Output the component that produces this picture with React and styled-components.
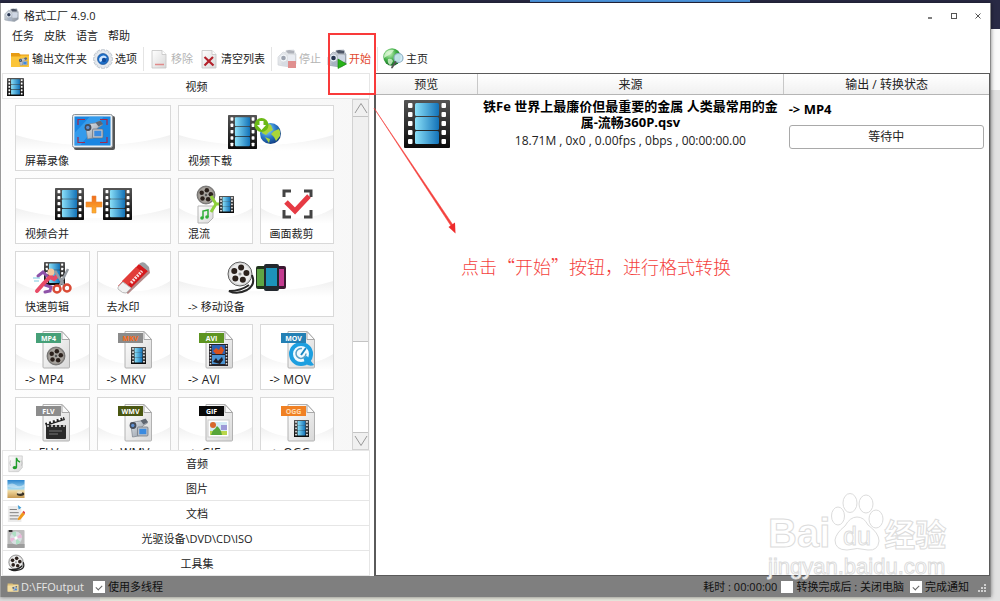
import React from "react";
import styled, { createGlobalStyle } from "styled-components";

const GlobalStyle = createGlobalStyle`
  * {
    box-sizing: border-box;
  }
  body {
    margin: 0;
    font-family: "Open Sans", "Noto Sans CJK SC", sans-serif;
    font-size: 11px;
    line-height: 16px;
    color: #222;
  }
  button {
    font: inherit;
    color: inherit;
    background: none;
    border: 0;
    padding: 0;
  }
  svg {
    display: block;
    flex: none;
  }
`;

/* ---------- drawings ---------- */

const Defs = () => (
  <svg width="0" height="0" style={{ position: "absolute" }} aria-hidden="true">
    <defs>
      <linearGradient id="frame" x1="0" x2="1" y1="0" y2="0">
        <stop offset="0" stopColor="#8be0f8" />
        <stop offset="1" stopColor="#1272b8" />
      </linearGradient>
      <linearGradient id="strip" x1="0" x2="0" y1="0" y2="1">
        <stop offset="0" stopColor="#555" />
        <stop offset="1" stopColor="#0a0a0a" />
      </linearGradient>
      <linearGradient id="paper" x1="0" x2="1" y1="0" y2="1">
        <stop offset="0" stopColor="#fff" />
        <stop offset="1" stopColor="#d8d8d8" />
      </linearGradient>
      <linearGradient id="metal" x1="0" x2="1" y1="0" y2="1">
        <stop offset="0" stopColor="#e8ecf0" />
        <stop offset="1" stopColor="#87909c" />
      </linearGradient>
      <radialGradient id="globe" cx="0.35" cy="0.3" r="0.8">
        <stop offset="0" stopColor="#9fe0ff" />
        <stop offset="0.5" stopColor="#2b7cc9" />
        <stop offset="1" stopColor="#0b2f73" />
      </radialGradient>
      <radialGradient id="greenGlobe" cx="0.35" cy="0.3" r="0.8">
        <stop offset="0" stopColor="#c9f5c0" />
        <stop offset="0.5" stopColor="#3fae45" />
        <stop offset="1" stopColor="#0c5a1c" />
      </radialGradient>
      <linearGradient id="sky" x1="0" x2="0" y1="0" y2="1">
        <stop offset="0" stopColor="#2b86cf" />
        <stop offset="0.5" stopColor="#a9dcf2" />
        <stop offset="0.6" stopColor="#f1d9a0" />
        <stop offset="1" stopColor="#c79a52" />
      </linearGradient>
      <linearGradient id="orange" x1="0" x2="0" y1="0" y2="1">
        <stop offset="0" stopColor="#f06a1c" />
        <stop offset="1" stopColor="#ffb52e" />
      </linearGradient>
    </defs>
  </svg>
);

const Film = ({ x = 0, y = 0, w = 30, h = 34 }) => (
  <svg x={x} y={y} width={w} height={h} viewBox="0 0 46 48" preserveAspectRatio="none">
    <rect width="46" height="48" rx="1" fill="url(#strip)" />
    {[3, 12, 21, 30, 39].map((top) => (
      <g key={top} fill="#fff">
        <rect x="4" y={top} width="4.500" height="5" rx="1" />
        <rect x="37.500" y={top} width="4.500" height="5" rx="1" />
      </g>
    ))}
    {[3, 17, 31].map((top) => (
      <rect key={top} x="11" y={top} width="24" height="13" rx="1.500" fill="url(#frame)" />
    ))}
  </svg>
);

const Reel = ({ cx, cy, r, light }) => (
  <g transform={`translate(${cx} ${cy}) scale(${r / 10})`}>
    <circle r="10" fill={light ? "#d9d9d9" : "#8b8783"} stroke="#5a5a5a" strokeWidth="0.800" />
    <circle r="8.500" fill={light ? "#ececec" : "#a8a49f"} />
    {[-80, -8, 64, 136, 208].map((a) => (
      <circle
        key={a}
        cx={5.4 * Math.cos((a * Math.PI) / 180)}
        cy={5.4 * Math.sin((a * Math.PI) / 180)}
        r="2.500"
        fill="#2b211c"
      />
    ))}
    <circle r="1.300" fill={light ? "#999" : "#555"} />
  </g>
);

const Camcorder = ({ x = 0, y = 0, w = 20, h = 20 }) => (
  <svg x={x} y={y} width={w} height={h} viewBox="0 0 20 20">
    <path d="M2 5 L8 3.500 L12 3 L17 1 L19 5 L14 8 L10 18 L4 19 L3 11 Z" fill="url(#metal)" stroke="#7b828c" strokeWidth="0.700" />
    <path d="M12 2.500 L17 0.800 L19.500 4 L15 6.500 Z" fill="#5f6671" />
    <circle cx="4.500" cy="7.500" r="3.400" fill="#454b57" />
    <circle cx="4.300" cy="7.500" r="1.700" fill="#5f8fd0" />
    <rect x="9" y="9" width="10.500" height="9" rx="1" fill="#b9bec6" stroke="#69707a" strokeWidth="0.700" />
    <rect x="10.800" y="10.800" width="7" height="5.400" fill="#3b8be0" />
  </svg>
);

/* the two-camera mark shared by the title bar, stop and start */
const AppMark = ({ w = 20, faded, children }) => (
  <svg width={w} height={w} viewBox="0 0 20 20">
    <g opacity={faded ? 0.45 : 1}>
      <path d="M1 8 L6 3 L9 4 L9 1.500 L17 1 L18 4 L19 5 L19 15 L14 18 L6 17 L1 16 Z" fill="url(#metal)" stroke="#8d97a6" strokeWidth="0.600" />
      <path d="M9 2 L12 1 L17 2 L17 4.500 L11 4.500 Z" fill="#4d5566" />
      <rect x="11" y="6" width="7" height="7" rx="1" fill="#cfd7e4" />
      <circle cx="6.500" cy="9" r="4" fill="#e8eef6" stroke="#8c96a5" strokeWidth="0.500" />
      <circle cx="6.500" cy="9" r="2.300" fill="#26344f" />
      <path d="M4 14 L10 12 L11 17 L6 17 Z" fill="#a7b2c2" />
    </g>
    {children}
  </svg>
);

const Page = ({ x = 3, children }) => (
  <svg width="20" height="20" viewBox="0 0 20 20">
    <path d={`M${x} 1.500 h10 l4 4 v13.500 h-14 z`} fill="url(#paper)" stroke="#c4c4c4" strokeWidth="0.800" />
    <path d={`M${x + 10} 1.500 v4 h4`} fill="#fff" stroke="#c4c4c4" strokeWidth="0.800" />
    {children}
  </svg>
);

const FolderIcon = ({ size = 20, pale }) => (
  <svg width={size} height={size} viewBox="0 0 20 20">
    <path d="M1 4 h8 l1.500 1.500 H19 V17 H1 z" fill={pale ? "#d9bd78" : "#e79b12"} />
    <path d="M1 7.500 h9 l1-1 h8 V18 H1 z" fill={pale ? "#f3dda0" : "#fbc53a"} />
    <Camcorder x={8} y={8} w={10} h={9} />
  </svg>
);

const GearIcon = () => (
  <svg width="20" height="20" viewBox="0 0 20 20">
    <g fill="#dfe4ea" stroke="#a3adb8" strokeWidth="0.500">
      {[0, 30, 60, 90, 120, 150].map((a) => (
        <rect key={a} x="8.300" y="0.400" width="3.400" height="19.200" rx="0.800" transform={`rotate(${a} 10 10)`} />
      ))}
    </g>
    <circle cx="10" cy="10" r="8" fill="#e6eaef" />
    <circle cx="10" cy="10" r="5.500" fill="#1d6fc8" stroke="#12468a" strokeWidth="0.600" />
    <path d="M7 13 A4 4 0 0 1 13.800 8.500 L12 10 A2.200 2.200 0 0 0 9 12 Z" fill="#cfe6ff" />
    <circle cx="11" cy="11" r="2.200" fill="#114b9c" />
  </svg>
);

const HomeIcon = () => (
  <svg width="21" height="21" viewBox="0 0 21 21">
    <circle cx="9" cy="9" r="8.700" fill="url(#greenGlobe)" />
    <path d="M3 4 Q7 1 11 2 Q9 6 6 7 Q4 8 1 10 Q1 6 3 4 Z M5 11 q4-1 5 2 q-1 3-3 4 q-3-2-2-6z" fill="#e0f8da" opacity="0.750" />
    <circle cx="15.500" cy="10" r="4.500" fill="#cdeaf6" fillOpacity="0.900" stroke="#8fb0c4" strokeWidth="1.200" />
    <path d="M12.500 14 L9 19.500" stroke="#555" strokeWidth="1.800" strokeLinecap="round" />
  </svg>
);

const FileArt = ({ tag, fill, ink = "#fff", children }) => (
  <svg width="40" height="42" viewBox="0 0 40 42">
    <path d="M11 1.500 h19 l7.500 8 v27.500 a1 1 0 0 1 -1 1 h-24.500 a1 1 0 0 1 -1 -1 z" fill="url(#paper)" stroke="#b2b2b2" />
    <path d="M30 1.500 v8 h7.500 z" fill="#fafafa" stroke="#a8a8a8" />
    {children}
    <rect x="4" y="3" width="25" height="10" fill={fill} />
    <text x="16.500" y="11" textAnchor="middle" fontSize="7" fontWeight="700" fontFamily="Open Sans, sans-serif" fill={ink}>
      {tag}
    </text>
  </svg>
);

const art = {
  record: (
    <svg width="46" height="42" viewBox="0 0 46 42">
      <rect x="4" y="5" width="41" height="34" rx="2" fill="#555" />
      <rect x="2.500" y="3.500" width="40" height="33" rx="2" fill="#e9edf0" stroke="#8d9499" />
      <rect x="4.500" y="5.500" width="36" height="29" fill="#1a86e2" />
      <path d="M4.500 22 L20 5.500 H34 L10 34.500 H4.500Z" fill="#4eb0f5" opacity="0.500" />
      <path d="M8 14 V8.500 h7 M30 8.500 h7 V14 M8 26 v5.500 h7 M30 31.500 h7 V26" stroke="#a02a50" strokeWidth="1.200" fill="none" />
      <Camcorder x={13} y={9} w={21} h={20} />
    </svg>
  ),
  download: (
    <svg width="58" height="42" viewBox="0 0 58 42">
      <Film x={1} y={4} w={29} h={34} />
      <circle cx="43.500" cy="22.500" r="10.500" fill="url(#globe)" />
      <path d="M37 15 q5-3 7-1 l2 5 -4 2 -3 3 -4-2 z M47 20 l5-2 q2 3 1 7 l-4 5 -2-4 -3-3z M38 26 l5 2 -1 4z" fill="#a8d53a" />
      <circle cx="34.500" cy="14" r="7" fill="#6cb916" />
      <path d="M32.500 10 h4 v4 h2.500 l-4.500 5 -4.500-5 h2.500z" fill="#fff" />
    </svg>
  ),
  merge: (
    <svg width="78" height="42" viewBox="0 0 78 42">
      <Film x={1} y={4} w={29} h={32} />
      <path d="M38 12 h4 v6 h6 v5 h-6 v6 h-4 v-6 h-6 v-5 h6z" fill="url(#orange)" stroke="#e88a3a" strokeWidth="0.600" />
      <Film x={49} y={4} w={29} h={32} />
    </svg>
  ),
  mux: (
    <svg width="40" height="42" viewBox="0 0 40 42">
      <Reel cx={11} cy={11} r={9} />
      <path d="M3 22 h15 v12 l-5 5 h-10z" fill="url(#paper)" stroke="#b5b5b5" />
      <path d="M8 34 v-7 l5-1 v7" stroke="#2fae38" strokeWidth="1.500" fill="none" />
      <circle cx="7" cy="34" r="1.800" fill="#2fae38" />
      <circle cx="12" cy="33" r="1.800" fill="#2fae38" />
      <path d="M16 12 L21 20 M16 28 L21 20 H27" stroke="#8fd03c" strokeWidth="3" fill="none" />
      <Film x={24} y={12} w={15} h={17} />
    </svg>
  ),
  crop: (
    <svg width="40" height="42" viewBox="0 0 40 42">
      <path d="M7 13 V7 h7 M27 7 h7 v6 M7 26 v7 h7 M27 33 h7 v-7" stroke="#444" strokeWidth="3" fill="none" />
      <path d="M9 18 L18 27 L32 12" stroke="#e63a44" strokeWidth="5" fill="none" />
    </svg>
  ),
  cut: (
    <svg width="42" height="42" viewBox="0 0 42 42">
      <Film x={13} y={5} w={21} h={23} />
      <path d="M17 20 L12 15 L7 19 M14 28 L20 30 L19 34 L14 35" stroke="#8e52a8" strokeWidth="3" fill="none" strokeLinecap="round" />
      <path d="M20 19 L13 26 L6 34 M19 20 L23 22 L26 19" stroke="#e84a66" strokeWidth="4" fill="none" strokeLinecap="round" />
      <circle cx="20" cy="15" r="3.500" fill="#f4c69c" />
      <path d="M2 21 h7 M3 24 h5" stroke="#78c9e0" strokeWidth="1" />
      <path d="M24 14 L34 30 M37 12 L28 30" stroke="#969ca3" strokeWidth="2.500" />
      <circle cx="26" cy="32" r="3.500" fill="none" stroke="#d94a35" strokeWidth="2.500" />
      <circle cx="36" cy="31" r="3.500" fill="none" stroke="#d94a35" strokeWidth="2.500" />
    </svg>
  ),
  eraser: (
    <svg width="40" height="42" viewBox="0 0 40 42">
      <path d="M27 6 L35 11 L36 16 L14 37 L11 35z" fill="#6d1010" opacity="0.500" />
      <path d="M25 7 L34 14 L12 36 L4 29z" fill="#d5191c" />
      <path d="M22 10 L27 14 L13 29 L8 24z" fill="#e23c38" />
      <path d="M25 7 q3-3 6 -1 l4 4 q1 2 -1 4z" fill="#9b9ea2" />
      <path d="M9 25 L17 31 L12 36 Q9 37 4 32 Q3 30 9 25z" fill="#f1f1f1" stroke="#bbb" />
      <path d="M17 26 L28 14" stroke="#fff" strokeWidth="3" strokeDasharray="2 1" opacity="0.850" />
    </svg>
  ),
  mobile: (
    <svg width="62" height="42" viewBox="0 0 62 42">
      <Reel cx={15} cy={17} r={12} light />
      <path d="M27 18 Q31 28 22 33 Q12 38 4 34 Q16 34 24 28" stroke="#272727" strokeWidth="2" fill="none" />
      <rect x="31" y="9" width="13" height="23" rx="2" fill="#20331c" />
      <rect x="32" y="12" width="9" height="17" fill="#5ea544" />
      <rect x="48" y="9" width="13" height="23" rx="2" fill="#3b1831" />
      <rect x="50" y="12" width="9" height="17" fill="#c43a90" />
      <rect x="39" y="7" width="15" height="27" rx="2" fill="#22282e" />
      <rect x="41" y="11" width="11" height="18" fill="#1c93ba" />
    </svg>
  ),
  mp4: (
    <FileArt tag="MP4" fill="#46a078">
      <Reel cx={24} cy={26} r={9} />
    </FileArt>
  ),
  mkv: (
    <FileArt tag="MKV" fill="#8b8b8b" ink="#ff6a14">
      <Film x={17} y={17} w={15} h={17} />
    </FileArt>
  ),
  avi: (
    <FileArt tag="AVI" fill="#5d9420">
      <rect x="14" y="14" width="19" height="22" fill="#27242a" />
      <rect x="17" y="15" width="13" height="9" fill="#2d62b4" />
      <rect x="17" y="25" width="13" height="9" fill="#4b93d2" />
      <path d="M18 21 l3-3 3 2 2-4 3 4 -2 4 h-6z" fill="#d9521c" />
      <path d="M18 32 l3-4 2 3 4-4 1 3 -3 4z" fill="#1d1a22" />
      <path d="M15.500 15 v21 M31.500 15 v21" stroke="#d8d8d8" strokeWidth="1.500" strokeDasharray="1.500 1.500" />
    </FileArt>
  ),
  mov: (
    <FileArt tag="MOV" fill="#2480b4">
      <circle cx="24" cy="24" r="10" fill="#f3fbff" stroke="#1d9fe0" strokeWidth="4" />
      <path d="M26 27 L30 26 L37 35 Q32 37 28 33z" fill="#1d9fe0" />
      <path d="M25 18.500 a5 5 0 1 0 4 5" stroke="#5ba0c6" strokeWidth="1.500" fill="none" />
      <path d="M24 25 L29 18" stroke="#1a87c2" strokeWidth="2" />
    </FileArt>
  ),
  flv: (
    <FileArt tag="FLV" fill="#8c8c8c">
      <rect x="14" y="22" width="20" height="14" rx="1" fill="#2a2a2a" />
      <path d="M13 20 L32 14 l1 3 L14 23z" fill="#222" />
      <path d="M15 20 L31 15" stroke="#fff" strokeWidth="2.500" strokeDasharray="2 2" />
      <path d="M15 23 h18" stroke="#ddd" strokeWidth="1.500" strokeDasharray="2 2" />
      <path d="M17 28 h13 M17 31 h9" stroke="#777" />
    </FileArt>
  ),
  wmv: (
    <FileArt tag="WMV" fill="#4a5712">
      <Camcorder x={14} y={15} w={21} h={20} />
    </FileArt>
  ),
  gif: (
    <FileArt tag="GIF" fill="#0a0a0a">
      <rect x="13" y="17" width="21" height="17" fill="#fff" stroke="#ccc" />
      <rect x="15" y="19" width="17" height="13" fill="#d5ecf5" />
      <path d="M15 28 h17 v4 h-17z" fill="#b9d64c" />
      <circle cx="18" cy="22" r="3" fill="#d8682c" />
      <path d="M16 32 q2-6 4-6 l2-3 q4 3 5 9z" fill="#57a53a" />
      <rect x="26" y="22" width="6" height="5" fill="#9d9ad8" />
    </FileArt>
  ),
  ogg: (
    <FileArt tag="OGG" fill="#f08124" ink="#ffd9ae">
      <Film x={17} y={17} w={15} h={17} />
    </FileArt>
  ),
};

const categoryArt = {
  audio: (
    <svg width="18" height="20" viewBox="0 0 20 20">
      <path d="M2 1 h15 v13 l-4 4.500 H2z" fill="url(#paper)" stroke="#c9c9c9" strokeWidth="0.800" />
      <path d="M10.500 14 V3 q0 3 4 5" stroke="#1f9d2b" strokeWidth="1.600" fill="none" />
      <ellipse cx="8.700" cy="14" rx="2.500" ry="1.900" fill="#1f9d2b" />
      <path d="M4 6 q-1.500 3 0 6 M16 6 q1.500 3 0 6" stroke="#bfbfbf" fill="none" />
    </svg>
  ),
  image: (
    <svg width="18" height="20" viewBox="0 0 20 20" preserveAspectRatio="none">
      <rect x="0.500" y="1" width="19" height="18" fill="url(#sky)" />
      <path d="M0.500 6 Q6 3 10 6 T19.500 5 V8 Q12 10 0.500 8z" fill="#e8f6fb" opacity="0.500" />
      <path d="M11 14 q4-2 8 0 v2 q-4 2-8 0z" fill="#3b3427" />
      <ellipse cx="14" cy="13.500" rx="3" ry="1.200" fill="#eee3c5" />
    </svg>
  ),
  doc: (
    <svg width="18" height="20" viewBox="0 0 20 20">
      <path d="M1 1 h11 l4 4 v14 H1z" fill="#ececec" />
      <path d="M12 0 l4 3 -3 2z" fill="#3f9dd6" />
      <path d="M3 5 h8 M3 8.500 h10 M3 12 h10 M3 15.500 h9" stroke="#777" />
      <path d="M12 15 L17 8 L20 10 L15 16 L12 17z" fill="#f09a1c" />
      <path d="M17 8 l1.500-1.500 2 2 -1 1.500z" fill="#e04444" />
    </svg>
  ),
  disc: (
    <svg width="18" height="20" viewBox="0 0 20 20" preserveAspectRatio="none">
      <rect x="0.500" y="1" width="19" height="18" rx="1" fill="#bdbdbd" />
      <rect x="0.500" y="15" width="19" height="4" fill="#9d9d9d" />
      <circle cx="10" cy="9" r="6.500" fill="#d8dfe2" />
      <path d="M10 9 L5 4.500 A6.500 6.500 0 0 1 10 2.500z M10 9 L15 13 A6.500 6.500 0 0 1 10 15.500z" fill="#aee0c4" />
      <path d="M10 9 L15 4.500 A6.500 6.500 0 0 1 16.500 9z M10 9 L5 13 A6.500 6.500 0 0 1 3.500 9z" fill="#e8b9d8" />
      <circle cx="10" cy="9" r="1.800" fill="#fff" />
      <rect x="2" y="1" width="4" height="2" fill="#333" />
    </svg>
  ),
  tools: (
    <svg width="18" height="20" viewBox="0 0 20 20">
      <Reel cx={10} cy={8} r={8} light />
      <path d="M18 8 q3 8-7 9 q-6 1-8-1 q9 1 14-4" stroke="#222" strokeWidth="1.400" fill="none" />
    </svg>
  ),
};

/* ---------- layout ---------- */

const Desktop = styled.div`
  position: relative;
  min-height: 100vh;
  display: flex;
  padding: 3px 9px 4px 0;
  overflow: hidden;
  background:
    linear-gradient(90deg, transparent 53%, #4f9be6 53%, #4f9be6 75%, transparent 75%) top / 100% 2px no-repeat,
    linear-gradient(#292a45, #292a45) top / 100% 29px no-repeat,
    linear-gradient(#fafafa, #fafafa) 0 29px / 100% 61px no-repeat,
    linear-gradient(90deg, #dcdcdc 10%, #e9e9df 10%, #e9e9df 87%, #e2e2e2 87%);
`;

const Window = styled.main`
  flex: 1;
  min-width: 0;
  display: flex;
  flex-direction: column;
  background: #fff;
  border-left: 1px solid #9a9a9a;
  border-right: 1px solid #8a8a8a;
  box-shadow: 0 0 4px rgba(0, 0, 0, 0.5);
`;

const TitleBar = styled.header`
  display: flex;
  align-items: center;
  height: 25px;
  padding-left: 3px;
  gap: 5px;
`;

const Title = styled.h1`
  flex: 1;
  margin: 0;
  font-size: 11px;
  font-weight: 400;
`;

const WindowButton = styled.button`
  width: 24px;
  height: 24px;
  display: grid;
  place-items: center;
`;

const WindowButtons = styled.div`
  display: flex;
`;

const MenuBar = styled.nav`
  display: flex;
  gap: 10px;
  height: 16px;
  padding-left: 11px;
`;

const ToolBar = styled.div`
  display: flex;
  align-items: center;
  gap: 6px;
  height: 29px;
  padding-left: 9px;
`;

const ToolButton = styled.button`
  display: flex;
  align-items: center;
  gap: 2px;
  color: ${(p) => (p.$hot ? "#e2492f" : "#222")};
  white-space: nowrap;

  &:disabled {
    color: #b4b4b4;
  }
`;

const Divider = styled.span`
  width: 1px;
  height: 24px;
  margin-right: -1px;
  background: #e4e4e4;
`;

const Body = styled.div`
  flex: 1;
  min-height: 0;
  display: flex;
`;

const Sidebar = styled.aside`
  flex: 0 0 373px;
  display: flex;
  flex-direction: column;
  padding: 0 4px 0 1px;
`;

const Category = styled.button`
  display: flex;
  align-items: center;
  height: 25px;
  padding: 1px 0 0 4px;
  border: 1px solid #e6e6e6;
  border-width: 0 1px 1px;

  &:first-child {
    height: 26px;
    border-width: 1px;
  }

  span {
    flex: 1;
    text-align: center;
  }
`;

const Browser = styled.div`
  flex: 1 1 0;
  min-height: 0;
  display: flex;
  padding-right: 1px;
  overflow: hidden;
  border-bottom: 1px solid #e6e6e6;
  background: linear-gradient(90deg, #fdfdfd, #f7f7f7);
`;

const Tiles = styled.div`
  flex: 1;
  display: grid;
  grid-template-columns: repeat(4, 1fr);
  grid-auto-rows: 66px;
  gap: 7px;
  padding: 6px 18px 0 13px;
  overflow: hidden;
`;

const Tile = styled.button`
  grid-column: span ${(p) => (p.$wide ? 2 : 1)};
  display: flex;
  flex-direction: column;
  align-items: center;
  padding: 5px 9px 0;
  border: 1px solid #d9d9d9;
  background:
    radial-gradient(ellipse 75% 62% at 50% 0, #fff 98%, transparent 100%),
    linear-gradient(#ededed 40%, #fff 70%);
`;

const TileLabel = styled.span`
  align-self: flex-start;
  font-size: ${(p) => (p.$format ? 12 : 11)}px;
`;

const ScrollBar = styled.div`
  width: 17px;
  display: flex;
  flex-direction: column;
  border: 1px solid #d2d2d2;
  background: #f0f0f0;
`;

const ScrollArrow = styled.button`
  height: 16px;
  display: grid;
  place-items: center;
  background: #f0f0f0;
`;

const ScrollTrack = styled.div`
  flex: 1;
  display: grid;
  grid-template-rows: 71fr 29fr;
  border: 1px solid #c4c4c4;
  border-width: 1px 0;
`;

const ScrollRest = styled.div`
  border-top: 1px solid #c4c4c4;
  background: #fff;
`;

const Tasks = styled.section`
  flex: 1;
  min-width: 0;
  border: 1px solid #5a5a5a;
  border-width: 1px 1px 1px 2px;
`;

const TaskTable = styled.table`
  width: 100%;
  table-layout: fixed;
  border-collapse: collapse;
  font-size: 12px;

  th {
    height: 20px;
    padding: 2px 0 0;
    font-weight: 400;
    border-bottom: 1px solid #b5b5b5;
    background: linear-gradient(#fff, #f0f0f0);
  }
  th + th {
    border-left: 1px solid #c8c8c8;
  }
  td {
    padding: 3px 5px;
    text-align: center;
    vertical-align: top;
  }
  td > svg {
    margin: 2px auto 0;
  }
`;

const Col = styled.col`
  width: ${(p) => p.$share}%;
`;

const TaskName = styled.strong`
  display: block;
  font-size: 13px;
  line-height: 16px;
  color: #000;
`;

const TaskInfo = styled.span`
  display: block;
  line-height: 22px;
`;

const Target = styled.strong`
  display: block;
  font-size: 13px;
  line-height: 22px;
  margin-bottom: 5px;
  text-align: left;
  color: #000;
`;

const State = styled.div`
  height: 24px;
  line-height: 22px;
  border: 1px solid #a9a9a9;
  border-radius: 3px;
  background: #fff;
`;

const StatusBar = styled.footer`
  display: flex;
  align-items: center;
  gap: 4px;
  height: 21px;
  padding: 0 1px 0 6px;
  background: #7f7f7f;
  color: #111;
  white-space: nowrap;
`;

const OutputPath = styled.a`
  display: flex;
  align-items: center;
  gap: 2px;
  margin-right: 5px;
  color: #e6e6e6;
  text-decoration: none;
`;

const Spacer = styled.span`
  flex: 1;
`;

const Check = styled.label`
  display: flex;
  align-items: center;
  gap: 3px;
  margin-right: 2px;

  input {
    appearance: none;
    display: grid;
    place-items: center;
    width: 12px;
    height: 12px;
    margin: 0;
    background: #fff;
  }
  input:checked::after {
    content: "";
    width: 5px;
    height: 3px;
    border: solid #666;
    border-width: 0 0 1px 1px;
    transform: rotate(-45deg);
  }
`;

/* ---------- notes lying over the window ---------- */

const Marker = styled.div`
  position: absolute;
  left: 328px;
  top: 33px;
  width: 48px;
  height: 62px;
  border: 2px solid #f93a3a;
  pointer-events: none;
`;

const Pointer = styled.svg`
  position: absolute;
  left: 370px;
  top: 104px;
  pointer-events: none;
`;

const Note = styled.p`
  position: absolute;
  left: 461px;
  top: 253px;
  margin: 0;
  font: 300 18px/26px "Noto Sans CJK SC", serif;
  color: #f4413d;
`;

const Watermark = styled.div`
  position: absolute;
  right: 52px;
  bottom: 22px;
  width: 180px;
  color: #fff;
  font-family: "Liberation Sans", "Noto Sans CJK SC", sans-serif;
  -webkit-text-stroke: 1px #dcdcdc;
  pointer-events: none;
`;

const WatermarkRow = styled.div`
  display: flex;
  align-items: flex-end;
  height: 62px;
  line-height: 44px;
  font-weight: 700;

  svg {
    margin-bottom: 3px;
  }
`;

const Brand = styled.span`
  font-size: 40px;
`;

const BrandTail = styled.span`
  font-size: 31px;
  line-height: 38px;
`;

const Site = styled.div`
  font-size: 22px;
  line-height: 24px;
`;

const tiles = [
  ["record", "屏幕录像", true],
  ["download", "视频下载", true],
  ["merge", "视频合并", true],
  ["mux", "混流"],
  ["crop", "画面裁剪"],
  ["cut", "快速剪辑"],
  ["eraser", "去水印"],
  ["mobile", "-> 移动设备", true],
  ["mp4", "-> MP4"],
  ["mkv", "-> MKV"],
  ["avi", "-> AVI"],
  ["mov", "-> MOV"],
  ["flv", "-> FLV"],
  ["wmv", "-> WMV"],
  ["gif", "-> GIF"],
  ["ogg", "-> OGG"],
];

const categories = [
  ["audio", "音频"],
  ["image", "图片"],
  ["doc", "文档"],
  ["disc", "光驱设备\\DVD\\CD\\ISO"],
  ["tools", "工具集"],
];

const App = () => {
  return (
    <Desktop lang="zh-CN">
      <GlobalStyle />
      <Defs />
      <Window>
        <TitleBar>
          <AppMark w={15} />
          <Title>格式工厂 4.9.0</Title>
          <WindowButtons>
            <WindowButton aria-label="最小化">
              <svg width="8" height="8" viewBox="0 0 8 8">
                <path d="M2 6 h4" stroke="#555" strokeWidth="1.500" />
              </svg>
            </WindowButton>
            <WindowButton aria-label="最大化">
              <svg width="8" height="8" viewBox="0 0 8 8">
                <rect x="1.500" y="1.500" width="5" height="5" fill="none" stroke="#555" />
              </svg>
            </WindowButton>
            <WindowButton aria-label="关闭">
              <svg width="8" height="8" viewBox="0 0 8 8">
                <path d="M1.500 1.500 L6.500 6.500 M6.500 1.500 L1.500 6.500" stroke="#555" />
              </svg>
            </WindowButton>
          </WindowButtons>
        </TitleBar>
        <MenuBar>
          <button>任务</button>
          <button>皮肤</button>
          <button>语言</button>
          <button>帮助</button>
        </MenuBar>
        <ToolBar>
          <ToolButton>
            <FolderIcon />
            输出文件夹
          </ToolButton>
          <ToolButton>
            <GearIcon />
            选项
          </ToolButton>
          <Divider />
          <ToolButton disabled>
            <Page>
              <path d="M6 15.500 h9" stroke="#e08a8a" strokeWidth="1.500" />
            </Page>
            移除
          </ToolButton>
          <ToolButton>
            <Page>
              <path d="M5.500 8 L14.500 16.500 M14 8 L5.500 16.500" stroke="#b3202a" strokeWidth="2.200" />
            </Page>
            清空列表
          </ToolButton>
          <Divider />
          <ToolButton disabled>
            <AppMark faded>
              <rect x="11" y="12" width="8" height="7" fill="#e08f8f" />
            </AppMark>
            停止
          </ToolButton>
          <ToolButton $hot>
            <AppMark>
              <path d="M11 10 L19.500 15 L11 19.500z" fill="#27b318" stroke="#138408" strokeWidth="0.600" />
            </AppMark>
            开始
          </ToolButton>
          <Divider />
          <ToolButton>
            <HomeIcon />
            主页
          </ToolButton>
        </ToolBar>
        <Body>
          <Sidebar>
            <Category>
              <Film w={17} h={18} />
              <span>视频</span>
            </Category>
            <Browser>
              <Tiles>
                {tiles.map(([id, label, wide]) => (
                  <Tile key={id} $wide={wide}>
                    {art[id]}
                    <TileLabel $format={!wide && label.startsWith("->")}>{label}</TileLabel>
                  </Tile>
                ))}
              </Tiles>
              <ScrollBar>
                <ScrollArrow aria-label="向上滚动">
                  <svg width="14" height="12" viewBox="0 0 14 12">
                    <path d="M1 11 L7 1.500 L13 11" stroke="#999" fill="none" />
                  </svg>
                </ScrollArrow>
                <ScrollTrack>
                  <div />
                  <ScrollRest />
                </ScrollTrack>
                <ScrollArrow aria-label="向下滚动">
                  <svg width="14" height="12" viewBox="0 0 14 12">
                    <path d="M1 1 L7 10.500 L13 1" stroke="#999" fill="none" />
                  </svg>
                </ScrollArrow>
              </ScrollBar>
            </Browser>
            {categories.map(([id, label]) => (
              <Category key={id}>
                {categoryArt[id]}
                <span>{label}</span>
              </Category>
            ))}
          </Sidebar>
          <Tasks>
            <TaskTable>
              <colgroup>
                <Col $share={16.5} />
                <Col $share={50} />
                <Col $share={33.5} />
              </colgroup>
              <thead>
                <tr>
                  <th>预览</th>
                  <th>来源</th>
                  <th>输出 / 转换状态</th>
                </tr>
              </thead>
              <tbody>
                <tr>
                  <td>
                    <Film w={46} h={48} />
                  </td>
                  <td>
                    <TaskName>铁Fe 世界上最廉价但最重要的金属 人类最常用的金属-流畅360P.qsv</TaskName>
                    <TaskInfo>18.71M , 0x0 , 0.00fps , 0bps , 00:00:00.00</TaskInfo>
                  </td>
                  <td>
                    <Target>-&gt; MP4</Target>
                    <State>等待中</State>
                  </td>
                </tr>
              </tbody>
            </TaskTable>
          </Tasks>
        </Body>
        <StatusBar>
          <OutputPath href="#output">
            <FolderIcon size={12} pale />
            D:\FFOutput
          </OutputPath>
          <Check>
            <input type="checkbox" defaultChecked />
            使用多线程
          </Check>
          <Spacer />
          <span>耗时 : 00:00:00</span>
          <Check>
            <input type="checkbox" />
            转换完成后 : 关闭电脑
          </Check>
          <Check>
            <input type="checkbox" defaultChecked />
            完成通知
          </Check>
          <svg width="14" height="14" viewBox="0 0 14 14" fill="#d0d0d0">
            {[
              [9, 4],
              [9, 7],
              [9, 10],
              [6, 7],
              [6, 10],
              [3, 10],
            ].map(([x, y]) => (
              <rect key={`${x}-${y}`} x={x} y={y} width="2" height="2" />
            ))}
          </svg>
        </StatusBar>
      </Window>

      <Marker />
      <Pointer width="92" height="134" viewBox="0 0 92 134">
        <path d="M4 4 L81 122 L83 121 z" fill="#f4413d" stroke="#f4413d" strokeWidth="0.500" />
        <path d="M85.500 129.500 L78.500 123 L85 118.500 z" fill="#ee2b2b" />
      </Pointer>
      <Note>点击“开始”按钮，进行格式转换</Note>
      <Watermark>
        <WatermarkRow>
          <Brand>Bai</Brand>
          <svg width="54" height="60" viewBox="0 0 54 60" fill="#fff" stroke="#dcdcdc">
            <ellipse cx="8" cy="24" rx="6.500" ry="9" />
            <ellipse cx="20" cy="11" rx="7" ry="9.500" />
            <ellipse cx="36" cy="12" rx="7" ry="9" />
            <ellipse cx="46" cy="27" rx="7" ry="9" />
            <path d="M27 25 Q34 25 38 33 Q49 41 49 49 Q48 59 38 58 Q27 55 17 58 Q5 58 5 48 Q6 41 15 34 Q20 25 27 25z" />
            <text x="27" y="53" textAnchor="middle" fontSize="25" fontWeight="400" fontFamily="Liberation Sans, sans-serif">
              du
            </text>
          </svg>
          <BrandTail>经验</BrandTail>
        </WatermarkRow>
        <Site>jingyan.baidu.com</Site>
      </Watermark>
    </Desktop>
  );
};

export default App;
